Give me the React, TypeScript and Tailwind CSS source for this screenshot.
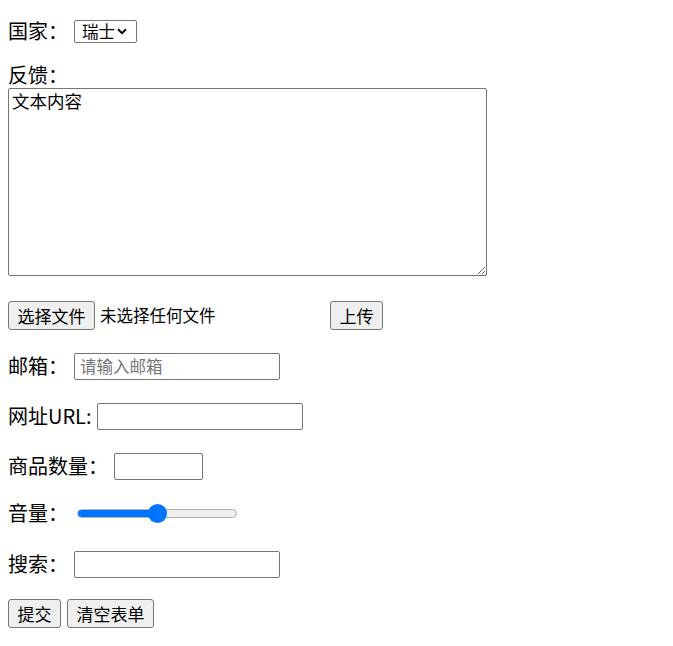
export default function App() {
  const btn =
    "h-[29px] flex items-center justify-center bg-[#efefef] border border-[#767676] rounded-[3px] text-[17px] leading-none text-black";
  const field =
    "h-[27px] border border-[#767676] rounded-[2px] bg-white px-[5px] text-[16.5px] leading-none outline-none placeholder:text-[#757575]";

  return (
    <div className="px-2 pt-4 text-[20px] leading-none text-black font-['Noto_Sans_CJK_SC','Noto_Sans',sans-serif]">
      {/* 国家 */}
      <div className="flex items-center h-[30px]">
        <span className="w-[66px]">国家：</span>
        <div className="h-[23px] w-[63px] flex items-center border border-[#767676] rounded-[2px] pl-[7px] pr-[9px] text-[16.5px]">
          <span className="flex-1">瑞士</span>
          <svg width="10" height="7" viewBox="0 0 10 7">
            <path d="M1 1.2 L5 5.2 L9 1.2" fill="none" stroke="#000" strokeWidth="2" />
          </svg>
        </div>
      </div>

      {/* 反馈 */}
      <div className="mt-[16px] h-[26px] flex items-center">反馈：</div>
      <textarea
        defaultValue="文本内容"
        className="block w-[479px] h-[188px] border border-[#767676] rounded-[2px] px-[3px] py-[1px] text-[17.5px] leading-[22px] outline-none"
      />

      {/* 文件 */}
      <div className="mt-6 flex items-center h-[30px]">
        <button className={btn + " w-[87px]"}>选择文件</button>
        <span className="w-[235px] pl-[5px] text-[16.5px]">未选择任何文件</span>
        <button className={btn + " w-[53px]"}>上传</button>
      </div>

      {/* 邮箱 */}
      <div className="mt-[21px] flex items-center h-[30px]">
        <span className="w-[66px]">邮箱：</span>
        <input type="email" placeholder="请输入邮箱" className={field + " w-[206px]"} />
      </div>

      {/* 网址 */}
      <div className="mt-[20px] flex items-center h-[30px]">
        <span className="w-[89px]">网址URL:</span>
        <input type="url" className={field + " w-[206px]"} />
      </div>

      {/* 商品数量 */}
      <div className="mt-[20px] flex items-center h-[30px]">
        <span className="w-[106px]">商品数量：</span>
        <input type="text" className={field + " w-[89px]"} />
      </div>

      {/* 音量 */}
      <div className="mt-[17px] flex items-center h-[30px]">
        <span className="w-[69px]">音量：</span>
        <input
          type="range"
          defaultValue={50}
          className="w-[160px] h-[9px] appearance-none rounded-full border border-[#b2b2b2] bg-[linear-gradient(to_right,#0075ff_50%,#efefef_50%)] [&::-webkit-slider-thumb]:appearance-none [&::-webkit-slider-thumb]:w-[19px] [&::-webkit-slider-thumb]:h-[19px] [&::-webkit-slider-thumb]:rounded-full [&::-webkit-slider-thumb]:bg-[#0075ff]"
        />
      </div>

      {/* 搜索 */}
      <div className="mt-[21px] flex items-center h-[30px]">
        <span className="w-[66px]">搜索：</span>
        <input type="search" className={field + " w-[206px]"} />
      </div>

      {/* 按钮 */}
      <div className="mt-[19px] flex items-center h-[30px] gap-[6px]">
        <button className={btn + " w-[53px]"}>提交</button>
        <button className={btn + " w-[87px]"}>清空表单</button>
      </div>
    </div>
  );
}
